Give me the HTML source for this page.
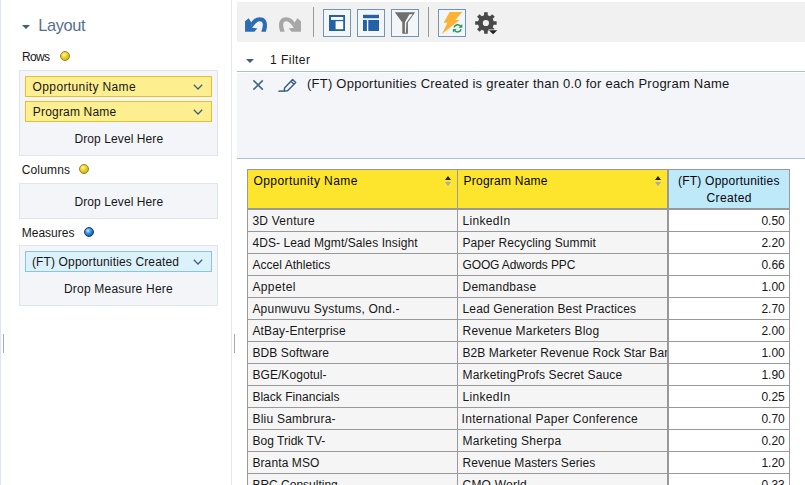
<!DOCTYPE html>
<html><head><meta charset="utf-8">
<style>
*{box-sizing:border-box;margin:0;padding:0}
html,body{width:805px;height:485px;overflow:hidden;background:#fff;font-family:"Liberation Sans",sans-serif}
.r,.t,.tri,.dot,.chev{position:absolute}
.t{white-space:nowrap;line-height:20px;height:20px}
.tri{width:0;height:0}
.dot{width:10px;height:10px;border-radius:50%}
.dot.y{background:radial-gradient(circle at 38% 33%,#fffcc0 0,#f2da3a 30%,#d9ba20 70%,#b4960e 100%);border:1px solid #98820f}
.dot.b{background:radial-gradient(circle at 38% 33%,#d8f0ff 0,#3d98e6 35%,#1766b8 70%,#0a3f7c 100%);border:1px solid #0c3c72}
.box{background:#f3f5f9;border:1px solid #dfe5ed}
.py{background:#fdef8f;border:1px solid #e4c02e}
.pb{background:#dcf2fb;border:1px solid #86c5e6}
.btn{border:1px solid #7097b1;background:#f4f5f8}
.chev{left:167.2px;top:6.7px;width:10px;height:6px}
</style></head><body>
<!-- left panel -->
<div class="r" style="left:0;top:0;width:1px;height:485px;background:#dde5ee"></div>
<div class="r" style="left:231px;top:0;width:1px;height:485px;background:#e1eaf0"></div>
<div class="r" style="left:3px;top:334px;width:1px;height:19px;background:#aaa"></div>
<div class="r" style="left:234px;top:334px;width:1px;height:19px;background:#aaa"></div>
<div class="tri" style="left:22px;top:25px;border-left:4px solid transparent;border-right:4px solid transparent;border-top:4px solid #3f5f80"></div>
<div class="dot y" style="left:60px;top:51px"></div>
<div class="dot y" style="left:79px;top:164px"></div>
<div class="dot b" style="left:84px;top:227px"></div>
<div class="r box" style="left:19px;top:70px;width:199px;height:86px"></div>
<div class="r py" style="left:25px;top:76px;width:187px;height:21px"><svg class="chev" viewBox="0 0 10 6"><path d="M0.8 0.8 L5 5 L9.2 0.8" fill="none" stroke="#3f6080" stroke-width="1.3"/></svg></div>
<div class="r py" style="left:25px;top:101px;width:187px;height:21px"><svg class="chev" viewBox="0 0 10 6"><path d="M0.8 0.8 L5 5 L9.2 0.8" fill="none" stroke="#3f6080" stroke-width="1.3"/></svg></div>
<div class="r box" style="left:19px;top:183px;width:199px;height:36px"></div>
<div class="r box" style="left:19px;top:245px;width:199px;height:61px"></div>
<div class="r pb" style="left:25px;top:251px;width:187px;height:21px"><svg class="chev" viewBox="0 0 10 6"><path d="M0.8 0.8 L5 5 L9.2 0.8" fill="none" stroke="#3f6080" stroke-width="1.3"/></svg></div>
<!-- toolbar -->
<div class="r" style="left:237px;top:2px;width:568px;height:40px;background:#f1f1f1"></div>
<div class="r" style="left:313px;top:7px;width:1px;height:30px;background:#999"></div>
<div class="r" style="left:428px;top:7px;width:1px;height:30px;background:#999"></div>
<div class="r btn" style="left:323px;top:9px;width:28px;height:28px"></div>
<div class="r btn" style="left:357px;top:9px;width:28px;height:28px"></div>
<div class="r btn" style="left:391px;top:9px;width:28px;height:28px"></div>
<div class="r btn" style="left:438px;top:9px;width:28px;height:28px"></div>
<!-- filter -->
<div class="tri" style="left:246px;top:59px;border-left:4px solid transparent;border-right:4px solid transparent;border-top:4px solid #3f5f80"></div>
<div class="r" style="left:237px;top:71px;width:568px;height:1px;background:#a3c1da"></div>
<div class="r" style="left:237px;top:73px;width:568px;height:85px;background:#f3f5f9"></div>
<div class="r" style="left:237px;top:158px;width:568px;height:1px;background:#a9c1d9"></div>
<!-- table -->
<div class="r" style="left:247px;top:169px;width:543px;height:316px;background:#999"></div>
<div class="r" style="left:248px;top:170px;width:209px;height:38px;background:#fde42d"></div>
<div class="r" style="left:458px;top:170px;width:209px;height:38px;background:#fde42d"></div>
<div class="r" style="left:669px;top:170px;width:120px;height:38px;background:#bde9f8"></div>
<div class="tri" style="left:445px;top:176px;border-left:3.5px solid transparent;border-right:3.5px solid transparent;border-bottom:4px solid #1e1e08;border-top:0"></div><div class="tri" style="left:445px;top:182px;border-left:3.5px solid transparent;border-right:3.5px solid transparent;border-top:4px solid #a8a8b0"></div><div class="tri" style="left:655px;top:176px;border-left:3.5px solid transparent;border-right:3.5px solid transparent;border-bottom:4px solid #1e1e08;border-top:0"></div><div class="tri" style="left:655px;top:182px;border-left:3.5px solid transparent;border-right:3.5px solid transparent;border-top:4px solid #a8a8b0"></div>
<div class="r" style="left:248px;top:210px;width:209px;height:21px;background:#f5f5f5"></div><div class="r" style="left:458px;top:210px;width:209px;height:21px;background:#f5f5f5"></div><div class="r" style="left:669px;top:210px;width:120px;height:21px;background:#fff"></div><div class="r" style="left:248px;top:232px;width:209px;height:21px;background:#f5f5f5"></div><div class="r" style="left:458px;top:232px;width:209px;height:21px;background:#f5f5f5"></div><div class="r" style="left:669px;top:232px;width:120px;height:21px;background:#fff"></div><div class="r" style="left:248px;top:254px;width:209px;height:21px;background:#f5f5f5"></div><div class="r" style="left:458px;top:254px;width:209px;height:21px;background:#f5f5f5"></div><div class="r" style="left:669px;top:254px;width:120px;height:21px;background:#fff"></div><div class="r" style="left:248px;top:276px;width:209px;height:21px;background:#f5f5f5"></div><div class="r" style="left:458px;top:276px;width:209px;height:21px;background:#f5f5f5"></div><div class="r" style="left:669px;top:276px;width:120px;height:21px;background:#fff"></div><div class="r" style="left:248px;top:298px;width:209px;height:21px;background:#f5f5f5"></div><div class="r" style="left:458px;top:298px;width:209px;height:21px;background:#f5f5f5"></div><div class="r" style="left:669px;top:298px;width:120px;height:21px;background:#fff"></div><div class="r" style="left:248px;top:320px;width:209px;height:21px;background:#f5f5f5"></div><div class="r" style="left:458px;top:320px;width:209px;height:21px;background:#f5f5f5"></div><div class="r" style="left:669px;top:320px;width:120px;height:21px;background:#fff"></div><div class="r" style="left:248px;top:342px;width:209px;height:21px;background:#f5f5f5"></div><div class="r" style="left:458px;top:342px;width:209px;height:21px;background:#f5f5f5"></div><div class="r" style="left:669px;top:342px;width:120px;height:21px;background:#fff"></div><div class="r" style="left:248px;top:364px;width:209px;height:21px;background:#f5f5f5"></div><div class="r" style="left:458px;top:364px;width:209px;height:21px;background:#f5f5f5"></div><div class="r" style="left:669px;top:364px;width:120px;height:21px;background:#fff"></div><div class="r" style="left:248px;top:386px;width:209px;height:21px;background:#f5f5f5"></div><div class="r" style="left:458px;top:386px;width:209px;height:21px;background:#f5f5f5"></div><div class="r" style="left:669px;top:386px;width:120px;height:21px;background:#fff"></div><div class="r" style="left:248px;top:408px;width:209px;height:21px;background:#f5f5f5"></div><div class="r" style="left:458px;top:408px;width:209px;height:21px;background:#f5f5f5"></div><div class="r" style="left:669px;top:408px;width:120px;height:21px;background:#fff"></div><div class="r" style="left:248px;top:430px;width:209px;height:21px;background:#f5f5f5"></div><div class="r" style="left:458px;top:430px;width:209px;height:21px;background:#f5f5f5"></div><div class="r" style="left:669px;top:430px;width:120px;height:21px;background:#fff"></div><div class="r" style="left:248px;top:452px;width:209px;height:21px;background:#f5f5f5"></div><div class="r" style="left:458px;top:452px;width:209px;height:21px;background:#f5f5f5"></div><div class="r" style="left:669px;top:452px;width:120px;height:21px;background:#fff"></div><div class="r" style="left:248px;top:474px;width:209px;height:21px;background:#f5f5f5"></div><div class="r" style="left:458px;top:474px;width:209px;height:21px;background:#f5f5f5"></div><div class="r" style="left:669px;top:474px;width:120px;height:21px;background:#fff"></div>
<!-- texts -->
<div class="t" style="left:38.30px;top:15.00px;font-size:16.4px;color:#56708e;letter-spacing:-0.392px">Layout</div>
<div class="t" style="left:22.00px;top:47.00px;font-size:12px;color:#171717;letter-spacing:-0.669px">Rows</div>
<div class="t" style="left:21.70px;top:159.50px;font-size:12px;color:#171717;letter-spacing:0.158px">Columns</div>
<div class="t" style="left:21.70px;top:223.00px;font-size:12px;color:#171717;letter-spacing:0.016px">Measures</div>
<div class="t" style="left:32.60px;top:77.00px;font-size:12px;color:#171717;letter-spacing:0.380px">Opportunity Name</div>
<div class="t" style="left:32.80px;top:102.00px;font-size:12px;color:#171717;letter-spacing:0.183px">Program Name</div>
<div class="t" style="left:74.50px;top:129.00px;font-size:12px;color:#171717;letter-spacing:0.086px">Drop Level Here</div>
<div class="t" style="left:74.50px;top:191.70px;font-size:12px;color:#171717;letter-spacing:0.086px">Drop Level Here</div>
<div class="t" style="left:31.90px;top:252.00px;font-size:12px;color:#171717;letter-spacing:0.148px">(FT) Opportunities Created</div>
<div class="t" style="left:64.00px;top:279.00px;font-size:12px;color:#171717;letter-spacing:0.206px">Drop Measure Here</div>
<div class="t" style="left:270.00px;top:49.80px;font-size:12px;color:#171717;letter-spacing:0.475px">1 Filter</div>
<div class="t" style="left:307.00px;top:73.90px;font-size:13px;color:#171717;letter-spacing:0.241px">(FT) Opportunities Created is greater than 0.0 for each Program Name</div>
<div class="t" style="left:253.40px;top:170.70px;font-size:12px;color:#050505;letter-spacing:0.446px">Opportunity Name</div>
<div class="t" style="left:463.50px;top:170.70px;font-size:12px;color:#050505;letter-spacing:0.238px">Program Name</div>
<div class="t" style="left:677.90px;top:171.00px;font-size:12px;color:#050510;letter-spacing:0.244px">(FT) Opportunities</div>
<div class="t" style="left:706.60px;top:188.00px;font-size:12px;color:#050510;letter-spacing:0.347px">Created</div>
<div class="t" style="left:252.40px;top:211.00px;font-size:12px;color:#171717;letter-spacing:0.237px">3D Venture</div>
<div class="t" style="left:462.50px;top:211.00px;font-size:12px;color:#171717;letter-spacing:0.329px">LinkedIn</div>
<div class="t" style="left:761.42px;top:211.00px;font-size:12px;color:#171717;letter-spacing:0.000px">0.50</div>
<div class="t" style="left:252.40px;top:233.00px;font-size:12px;color:#171717;letter-spacing:0.089px">4DS- Lead Mgmt/Sales Insight</div>
<div class="t" style="left:462.50px;top:233.00px;font-size:12px;color:#171717;letter-spacing:0.093px">Paper Recycling Summit</div>
<div class="t" style="left:761.42px;top:233.00px;font-size:12px;color:#171717;letter-spacing:0.000px">2.20</div>
<div class="t" style="left:252.40px;top:255.00px;font-size:12px;color:#171717;letter-spacing:0.041px">Accel Athletics</div>
<div class="t" style="left:462.50px;top:255.00px;font-size:12px;color:#171717;letter-spacing:-0.127px">GOOG Adwords PPC</div>
<div class="t" style="left:761.42px;top:255.00px;font-size:12px;color:#171717;letter-spacing:0.000px">0.66</div>
<div class="t" style="left:252.40px;top:277.00px;font-size:12px;color:#171717;letter-spacing:0.378px">Appetel</div>
<div class="t" style="left:462.50px;top:277.00px;font-size:12px;color:#171717;letter-spacing:0.244px">Demandbase</div>
<div class="t" style="left:761.42px;top:277.00px;font-size:12px;color:#171717;letter-spacing:0.000px">1.00</div>
<div class="t" style="left:252.40px;top:299.00px;font-size:12px;color:#171717;letter-spacing:0.229px">Apunwuvu Systums, Ond.-</div>
<div class="t" style="left:462.50px;top:299.00px;font-size:12px;color:#171717;letter-spacing:0.140px">Lead Generation Best Practices</div>
<div class="t" style="left:761.42px;top:299.00px;font-size:12px;color:#171717;letter-spacing:0.000px">2.70</div>
<div class="t" style="left:252.40px;top:321.00px;font-size:12px;color:#171717;letter-spacing:0.171px">AtBay-Enterprise</div>
<div class="t" style="left:462.50px;top:321.00px;font-size:12px;color:#171717;letter-spacing:0.219px">Revenue Marketers Blog</div>
<div class="t" style="left:761.42px;top:321.00px;font-size:12px;color:#171717;letter-spacing:0.000px">2.00</div>
<div class="t" style="left:252.40px;top:343.00px;font-size:12px;color:#171717;letter-spacing:0.110px">BDB Software</div>
<div class="t" style="left:462.50px;top:343.00px;font-size:12px;color:#171717;letter-spacing:0.088px;width:204.5px;overflow:hidden">B2B Marketer Revenue Rock Star Banquet</div>
<div class="t" style="left:761.42px;top:343.00px;font-size:12px;color:#171717;letter-spacing:0.000px">1.00</div>
<div class="t" style="left:252.40px;top:365.00px;font-size:12px;color:#171717;letter-spacing:0.075px">BGE/Kogotul-</div>
<div class="t" style="left:462.50px;top:365.00px;font-size:12px;color:#171717;letter-spacing:0.135px">MarketingProfs Secret Sauce</div>
<div class="t" style="left:761.42px;top:365.00px;font-size:12px;color:#171717;letter-spacing:0.000px">1.90</div>
<div class="t" style="left:252.40px;top:387.00px;font-size:12px;color:#171717;letter-spacing:0.027px">Black Financials</div>
<div class="t" style="left:462.50px;top:387.00px;font-size:12px;color:#171717;letter-spacing:0.329px">LinkedIn</div>
<div class="t" style="left:761.42px;top:387.00px;font-size:12px;color:#171717;letter-spacing:0.000px">0.25</div>
<div class="t" style="left:252.40px;top:409.00px;font-size:12px;color:#171717;letter-spacing:0.244px">Bliu Sambrura-</div>
<div class="t" style="left:461.50px;top:409.00px;font-size:12px;color:#171717;letter-spacing:0.324px">International Paper Conference</div>
<div class="t" style="left:761.42px;top:409.00px;font-size:12px;color:#171717;letter-spacing:0.000px">0.70</div>
<div class="t" style="left:252.40px;top:431.00px;font-size:12px;color:#171717;letter-spacing:0.032px">Bog Tridk TV-</div>
<div class="t" style="left:462.50px;top:431.00px;font-size:12px;color:#171717;letter-spacing:0.257px">Marketing Sherpa</div>
<div class="t" style="left:761.42px;top:431.00px;font-size:12px;color:#171717;letter-spacing:0.000px">0.20</div>
<div class="t" style="left:252.40px;top:453.00px;font-size:12px;color:#171717;letter-spacing:0.112px">Branta MSO</div>
<div class="t" style="left:462.50px;top:453.00px;font-size:12px;color:#171717;letter-spacing:0.062px">Revenue Masters Series</div>
<div class="t" style="left:761.42px;top:453.00px;font-size:12px;color:#171717;letter-spacing:0.000px">1.20</div>
<div class="t" style="left:252.40px;top:475.00px;font-size:12px;color:#171717;letter-spacing:0.000px">BRC Consulting</div>
<div class="t" style="left:462.50px;top:475.00px;font-size:12px;color:#171717;letter-spacing:0.228px">CMO World</div>
<div class="t" style="left:761.42px;top:475.00px;font-size:12px;color:#171717;letter-spacing:0.000px">0.33</div>
<svg class="r" style="left:0;top:0" width="805" height="485" viewBox="0 0 805 485">
<g transform="translate(240,10)" fill="#2b6cb4"><path d="M10.9,13 C13,9.5 16,7.2 20,7.2 C24.5,7.2 27,10.5 27,15 C27,17.5 26.5,19.5 25.8,21.7 L21.3,21.7 C22.3,18.5 23,16 22.8,14 C22.5,12 21.3,11.3 19.6,11.3 C17,11.3 14.5,14.5 12.2,17.8 Z"/><path d="M5.04,21.7 L5.04,11.3 L8.7,8.3 L11.3,12.6 L12.2,17.8 L17.4,18.5 L14.3,21.7 Z"/></g>
<g transform="translate(306,10) scale(-1,1)" fill="#a7a7a7"><path d="M10.9,13 C13,9.5 16,7.2 20,7.2 C24.5,7.2 27,10.5 27,15 C27,17.5 26.5,19.5 25.8,21.7 L21.3,21.7 C22.3,18.5 23,16 22.8,14 C22.5,12 21.3,11.3 19.6,11.3 C17,11.3 14.5,14.5 12.2,17.8 Z"/><path d="M5.04,21.7 L5.04,11.3 L8.7,8.3 L11.3,12.6 L12.2,17.8 L17.4,18.5 L14.3,21.7 Z"/></g>
<!-- icon1 -->
<rect x="329" y="15" width="16" height="16" fill="#2462a8"/>
<rect x="331" y="17" width="12.2" height="2.9" fill="#fff"/>
<rect x="335.6" y="21.2" width="7.6" height="8" fill="#fff"/>
<!-- icon2 -->
<rect x="363" y="14.8" width="16" height="3.4" fill="#2462a8"/>
<rect x="363" y="20" width="3.9" height="11" fill="#2462a8"/>
<rect x="368.3" y="20" width="10.7" height="11" fill="#2462a8"/>
<!-- funnel -->
<path d="M394.8,12.3 L415.1,12.3 L407.9,22.5 L407.9,33.7 L402.3,33.7 L402.3,22.5 Z" fill="#6e6e6e"/>
<path d="M409.5,14.2 L412.6,14.2 L406.3,22.8 L405.9,32.8 L404.9,32.8 L404.9,22.3 Z" fill="#fbfbfb"/>
<!-- lightning -->
<path d="M449.7,12.1 L462.3,12.1 L455.3,19.9 L459.7,19.9 L441.8,34 L447.5,22.7 L443.6,22.7 Z" fill="#fdb235"/>
<g fill="none" stroke="#1f9d5c" stroke-width="1.5">
<path d="M454.12,27.37 A3.6,3.6 0 0 1 460.55,26.24"/>
<path d="M461.08,29.23 A3.6,3.6 0 0 1 454.65,30.36"/>
</g>
<path d="M462.3,24 L462.3,27.7 L458.6,27.7 Z" fill="#1f9d5c"/>
<path d="M452.9,32.6 L452.9,28.9 L456.6,28.9 Z" fill="#1f9d5c"/>
<!-- gear -->
<path d="M484.03,15.22 L484.10,12.25 L487.70,12.25 L487.77,15.22 L490.08,16.18 L492.23,14.13 L494.77,16.67 L492.72,18.82 L493.68,21.13 L496.65,21.20 L496.65,24.80 L493.68,24.87 L492.72,27.18 L494.77,29.33 L492.23,31.87 L490.08,29.82 L487.77,30.78 L487.70,33.75 L484.10,33.75 L484.03,30.78 L481.72,29.82 L479.57,31.87 L477.03,29.33 L479.08,27.18 L478.12,24.87 L475.15,24.80 L475.15,21.20 L478.12,21.13 L479.08,18.82 L477.03,16.67 L479.57,14.13 L481.72,16.18Z M489.00,23.00 A3.1,3.1 0 1,0 482.80,23.00 A3.1,3.1 0 1,0 489.00,23.00Z" fill="#494949" fill-rule="evenodd"/>
<path d="M488.2,29.4 L498,29.4 L493.1,34.6 Z" fill="#f1f1f1"/>
<path d="M488.9,30.2 L497.3,30.2 L493.1,34.2 Z" fill="#222"/>
<!-- X -->
<path d="M253.4,80.4 L262.8,89.6 M262.8,80.4 L253.4,89.6" stroke="#3f6888" stroke-width="1.6" fill="none"/>
<!-- pencil -->
<g fill="none" stroke="#3a5f80" stroke-width="1.45" stroke-linejoin="round">
<path d="M292.6,79.5 L295.7,82.5 L287.6,90.8 L284.4,91 L284.5,87.9 Z"/>
<path d="M290.9,81.2 L294,84.2"/>
<path d="M278.4,91.3 L285,91" stroke-width="1.5"/>
</g>
</svg>
</body></html>
